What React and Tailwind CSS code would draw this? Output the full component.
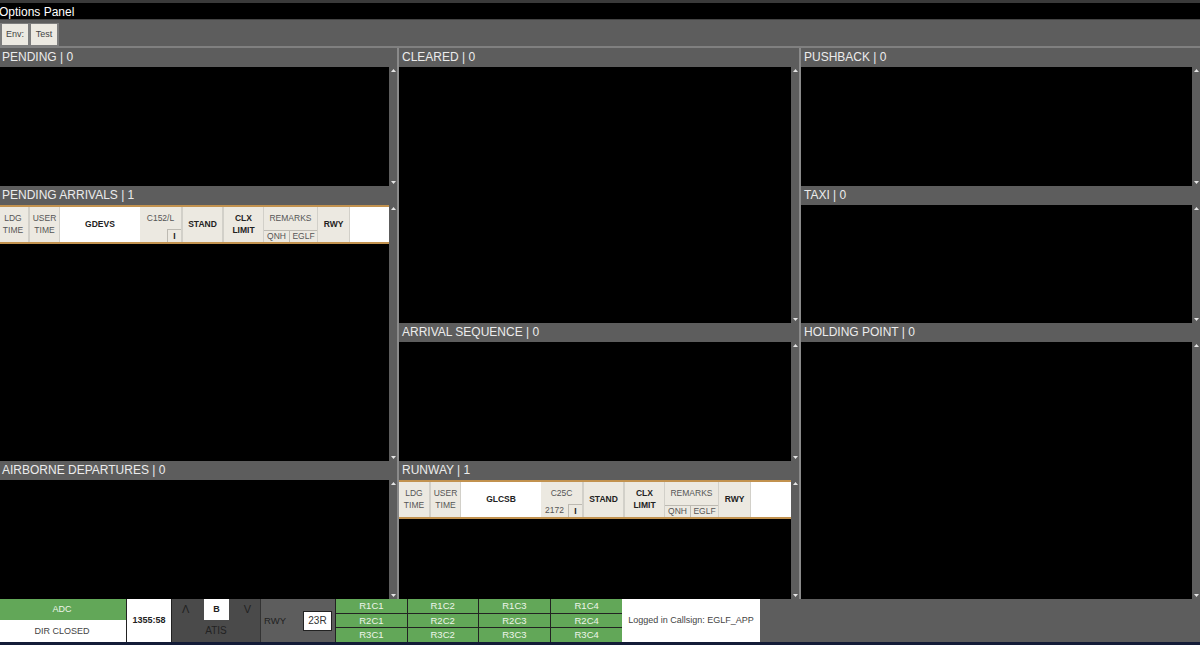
const FONT = "font-['Liberation_Sans',Arial,sans-serif]";

function Strip({ callsign, type, extra, clipped }) {
  const cell = "bg-[#ece9e1] border-l-2 border-[#d2d0c9] pb-[1px] flex items-center justify-center text-center text-[#555] text-[8.5px] leading-[12px]";
  return (
    <div className="h-[39px] shrink-0 border-y-2 border-[#c2924f] bg-white flex overflow-hidden">
      <div className={`${cell} w-[30px] shrink-0 !border-l-0 ${clipped ? "-ml-[2px]" : ""}`}>LDG<br />TIME</div>
      <div className={`${cell} w-[31px] shrink-0`}>USER<br />TIME</div>
      <div className="w-[81px] shrink-0 border-l border-[#d2d0c9] flex items-center justify-center text-[8.5px] font-bold text-[#222]">{callsign}</div>
      <div className="w-[41px] shrink-0 bg-[#ece9e1] flex flex-col text-[8.5px] leading-none text-[#555]">
        <div className="h-[22px] flex items-center justify-center">{type}</div>
        <div className="flex-1 flex items-end justify-end">
          <span className="flex-1 text-center leading-[13px]">{extra}</span>
          <span className="w-[14px] h-[13px] bg-[#ece9e1] border-l border-t border-[#bdbab2] flex items-center justify-center font-bold text-[#222]">I</span>
        </div>
      </div>
      <div className={`${cell} w-[41px] shrink-0 font-bold !text-[#222]`}>STAND</div>
      <div className={`${cell} w-[41px] shrink-0 font-bold !text-[#222]`}>CLX<br />LIMIT</div>
      <div className="w-[54px] shrink-0 border-l border-[#d2d0c9] bg-[#ece9e1] flex flex-col text-[8.5px] leading-none text-[#555]">
        <div className="h-[23px] pb-[1px] flex items-center justify-center">REMARKS</div>
        <div className="flex-1 flex border-t border-[#bdbab2] items-center">
          <span className="w-[25px] pb-[1px] text-center">QNH</span>
          <span className="flex-1 h-full pb-[1px] flex items-center justify-center border-l border-[#bdbab2]">EGLF</span>
        </div>
      </div>
      <div className={`${cell} w-[32px] shrink-0 !border-l font-bold !text-[#222]`}>RWY</div>
      <div className="flex-1 border-l border-[#d2d0c9]" />
    </div>
  );
}

function Arrow({ down }) {
  return (
    <svg width="5" height="3" viewBox="0 0 5 3" className="my-[2px] text-[#e5e5e5]">
      <polygon points={down ? "0,0 5,0 2.5,3" : "2.5,0 5,3 0,3"} fill="currentColor" />
    </svg>
  );
}

function Panel({ title, height, strip, pad = "pl-[2px]" }) {
  return (
    <div className="flex flex-col" style={{ height }}>
      <div className={`h-[19px] shrink-0 bg-[#5d5d5d] text-[#ececec] text-[12px] leading-[19px] whitespace-nowrap ${pad}`}>{title}</div>
      <div className="flex-1 min-h-0 flex">
        <div className="flex-1 min-w-0 bg-black">{strip && <Strip {...strip} />}</div>
        <div className="w-[8px] shrink-0 bg-[#5d5d5d] flex flex-col items-center justify-between">
          <Arrow />
          <Arrow down />
        </div>
      </div>
    </div>
  );
}

function Column({ panels, className, pad }) {
  return (
    <div className={`flex flex-col ${className}`}>
      {panels.map((p) => <Panel key={p.title} pad={pad} {...p} />)}
    </div>
  );
}

export default function App() {
  const rows = ["1", "2", "3"];
  const cols = [
    { n: "1", w: "w-[71px]" },
    { n: "2", w: "w-[70px]" },
    { n: "3", w: "w-[72px]" },
    { n: "4", w: "w-[71px]" },
  ];
  return (
    <div className={`w-[1200px] h-[645px] overflow-hidden bg-[#5d5d5d] flex flex-col ${FONT}`}>
      <div className="h-[3px] shrink-0 bg-[#3a3a3a]" />
      <div className="h-[17px] shrink-0 bg-black text-white text-[12px] leading-[18px] -ml-[1px] border-b border-[#444] overflow-hidden">Options Panel</div>
      <div className="h-[28px] shrink-0 flex items-end border-b-2 border-[#808080]">
        <div className="flex gap-[3px] px-[2px] py-[1px] bg-[#7d7d7d] h-[23px]">
          <div className="w-[26px] bg-[#ece9e1] text-[#444] text-[9px] flex items-center justify-center">Env:</div>
          <div className="w-[26px] bg-[#ece9e1] text-[#444] text-[9px] flex items-center justify-center">Test</div>
        </div>
      </div>
      <div className="flex h-[551px] shrink-0">
        <Column
          className="w-[397px]"
          panels={[
            { title: "PENDING | 0", height: 138 },
            { title: "PENDING ARRIVALS | 1", height: 275, strip: { callsign: "GDEVS", type: "C152/L", extra: "", clipped: true } },
            { title: "AIRBORNE DEPARTURES | 0", height: 138 },
          ]}
        />
        <div className="w-[2px] bg-[#8a8a8a]" />
        <Column
          className="w-[400px]"
          pad="pl-[3px]"
          panels={[
            { title: "CLEARED | 0", height: 275 },
            { title: "ARRIVAL SEQUENCE | 0", height: 138 },
            { title: "RUNWAY | 1", height: 138, strip: { callsign: "GLCSB", type: "C25C", extra: "2172" } },
          ]}
        />
        <div className="w-[2px] bg-[#8a8a8a]" />
        <Column
          className="w-[399px]"
          pad="pl-[3px]"
          panels={[
            { title: "PUSHBACK | 0", height: 138 },
            { title: "TAXI | 0", height: 137 },
            { title: "HOLDING POINT | 0", height: 276 },
          ]}
        />
      </div>
      <div className="h-[43px] shrink-0 flex text-[9px] leading-none">
        <div className="w-[126px] flex flex-col">
          <div className="h-[21px] pr-[2px] bg-[#62a758] text-[#eef5ea] flex items-center justify-center">ADC</div>
          <div className="flex-1 pr-[2px] bg-white text-[#444] flex items-center justify-center">DIR CLOSED</div>
        </div>
        <div className="w-[46px] bg-white border-x border-[#222] flex items-center justify-center font-bold text-[#222]">1355:58</div>
        <div className="w-[89px] bg-[#4a4a4a] border-r border-[#333] flex flex-col items-center text-[#222]">
          <div className="h-[21px] w-full flex items-center justify-between pl-[10px] pr-[9px] text-[11px]">
            <span>Λ</span>
            <span className="w-[25px] h-full bg-white flex items-center justify-center text-[9px] font-bold">B</span>
            <span>V</span>
          </div>
          <div className="flex-1 flex items-center text-[10px]">ATIS</div>
        </div>
        <div className="w-[74px] bg-[#5d5d5d] flex items-center justify-between pl-[3px] pr-[3px] text-[#222] text-[9.5px]">
          <span>RWY</span>
          <span className="w-[29px] h-[20px] bg-white border border-[#222] flex items-center justify-center text-[#333] text-[10px]">23R</span>
        </div>
        <div className="flex flex-col gap-[1px] bg-[#222] w-[287px] pl-[1px]">
          {rows.map((r) => (
            <div key={r} className="flex-1 flex gap-[1px]">
              {cols.map((c) => (
                <div key={c.n} className={`${c.w} bg-[#62a758] text-[#eef5ea] text-[9.5px] flex items-center justify-center`}>R{r}C{c.n}</div>
              ))}
            </div>
          ))}
        </div>
        <div className="w-[138px] bg-white text-[#444] flex items-center justify-center whitespace-nowrap">Logged in Callsign: EGLF_APP</div>
      </div>
      <div className="h-[3px] shrink-0 bg-[#141c38]" />
    </div>
  );
}
